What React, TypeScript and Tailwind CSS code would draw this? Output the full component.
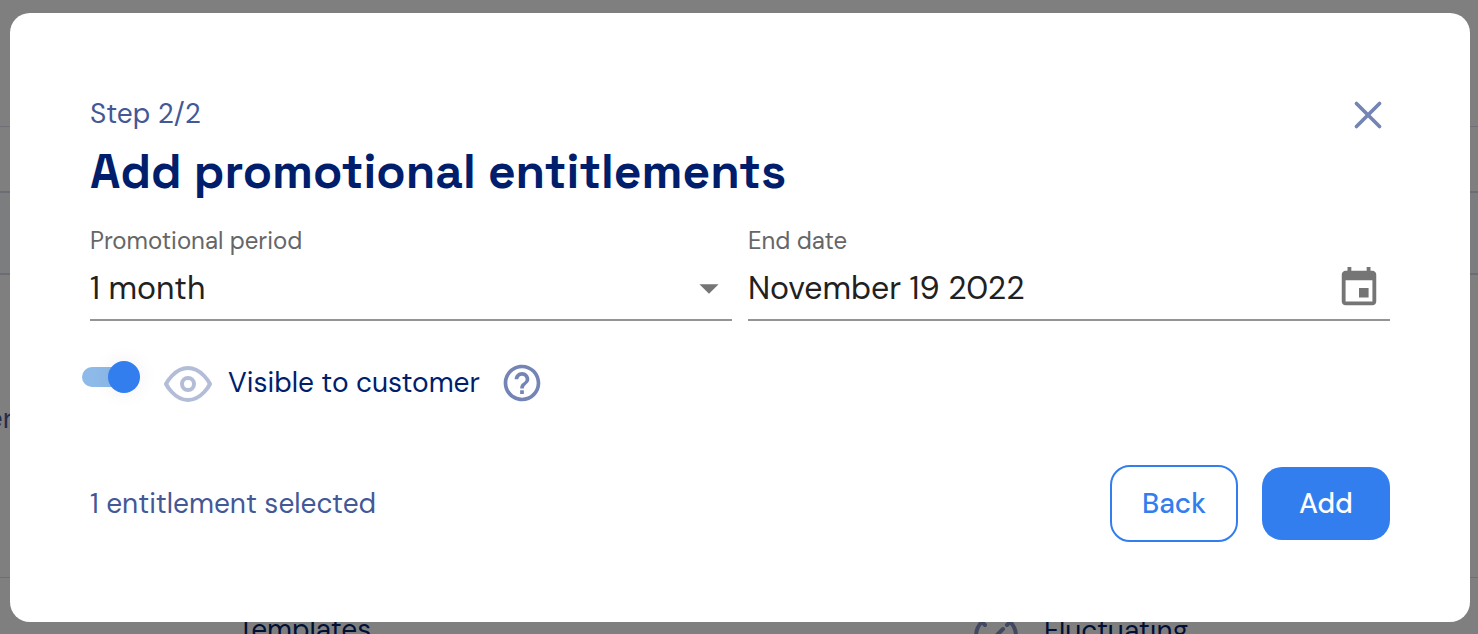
import { useState } from "react";

function Backdrop() {
  return (
    <div aria-hidden="true" className="absolute inset-0 overflow-hidden bg-white text-[28px] leading-[42px] text-[#001e6c]">
      <div className="h-[127px] border-b border-[#dfe0ee]" />
      <div className="h-[66px] border-b-2 border-[#d8dae8]" />
      <div className="h-[82px] border-b-2 border-[#d8dae8] bg-[#f6faff]" />
      <div className="flex h-[303px] items-center border-b border-[#dfdfe2] pb-[14px] text-[#4a5c9c]">
        <span className="flex w-[13px] justify-end">er</span>
      </div>
      <div className="grid grid-cols-[238px_736px_1fr] pt-[31px]">
        <span />
        <span>Templates</span>
        <span className="flex items-center gap-[26px]">
          <svg viewBox="0 -5 44 44" className="size-11 overflow-visible" fill="none" stroke="#8591be" strokeWidth="4" strokeLinecap="round">
            <circle cx="22" cy="22" r="20" />
            <path d="M8 8l3 3M36 8l-3 3M20 24l9-9" />
          </svg>
          Fluctuating
        </span>
      </div>
    </div>
  );
}

export default function App() {
  const [visible, setVisible] = useState(true);
  const [period, setPeriod] = useState("1 month");
  const [date, setDate] = useState("November 19 2022");

  return (
    <div className="relative min-h-screen overflow-hidden font-['DM_Sans',Inter,sans-serif]">
      <Backdrop />
      <div className="relative min-h-screen bg-black/50 pt-[13px] pr-2 pb-3 pl-[10px]">
        <section role="dialog" aria-modal="true" aria-labelledby="dialog-title" className="rounded-[20px] bg-white p-20">
          <header className="flex items-start justify-between">
            <div>
              <p className="text-[28px] leading-[42px] text-[#435896]">Step 2/2</p>
              <h1 id="dialog-title" className="font-['Space_Grotesk','DM_Sans',Inter,sans-serif] text-[48px] leading-[74px] font-bold text-[#001e6c]">
                Add promotional entitlements
              </h1>
            </div>
            <button type="button" aria-label="Close" className="text-[#7485b5]">
              <svg viewBox="0 0 24 24" className="size-11" fill="none" stroke="currentColor" strokeWidth="2" strokeLinecap="round">
                <path d="M5.7 5.7l12.6 12.6M18.3 5.7l-12.6 12.6" />
              </svg>
            </button>
          </header>

          <div className="mt-[18px] grid grid-cols-2 gap-4">
            <div>
              <label htmlFor="period" className="block h-[30px] text-[24px] leading-[28px] text-[#666666]">
                Promotional period
              </label>
              <div className="relative">
                <select
                  id="period"
                  value={period}
                  onChange={(e) => setPeriod(e.target.value)}
                  className="block h-16 w-full appearance-none border-b-2 border-[#949494] bg-transparent text-[32px] text-[#212121] outline-none"
                >
                  <option>1 month</option>
                </select>
                <svg viewBox="0 0 24 24" className="pointer-events-none absolute top-2 right-0 size-[46px] fill-[#757575]">
                  <path d="M7 10l5 5 5-5z" />
                </svg>
              </div>
            </div>
            <div>
              <label htmlFor="end-date" className="block h-[30px] text-[24px] leading-[28px] text-[#666666]">
                End date
              </label>
              <div className="flex h-16 items-center border-b-2 border-[#949494] pr-2">
                <input
                  id="end-date"
                  value={date}
                  onChange={(e) => setDate(e.target.value)}
                  className="min-w-0 flex-1 bg-transparent text-[32px] text-[#212121] outline-none"
                />
                <button type="button" aria-label="Choose date">
                  <svg viewBox="0 0 24 24" className="size-[46px] fill-[#757575]">
                    <path d="M17 12h-5v5h5v-5zM16 1v2H8V1H6v2H5c-1.11 0-1.99.9-1.99 2L3 19c0 1.1.89 2 2 2h14c1.1 0 2-.9 2-2V5c0-1.1-.9-2-2-2h-1V1h-2zm3 18H5V8h14v11z" />
                  </svg>
                </button>
              </div>
            </div>
          </div>

          <div className="mt-8 -ml-2 flex items-start gap-6">
            <span className="relative flex h-12 w-[58px] items-center">
              <input
                id="visible"
                type="checkbox"
                role="switch"
                checked={visible}
                onChange={(e) => setVisible(e.target.checked)}
                className="peer h-5 w-[52px] appearance-none rounded-full bg-gray-300 outline-none checked:bg-[#8dbae8]"
              />
              <span className="pointer-events-none absolute left-0 size-8 rounded-full bg-gray-50 shadow-[0_0_20px_rgba(0,30,108,0.07)] peer-checked:left-auto peer-checked:right-0 peer-checked:bg-[#327eef]" />
            </span>
            <div className="flex h-[60px] items-center gap-5">
              <div className="flex items-center gap-4">
                <svg viewBox="0 0 24 24" className="size-12" fill="none" stroke="#b3bdd8" strokeWidth="2" strokeLinecap="round" strokeLinejoin="round">
                  <path d="M1 12.5s4-8 11-8 11 8 11 8-4 8-11 8-11-8-11-8z" />
                  <circle cx="12" cy="12.5" r="3" />
                </svg>
                <label htmlFor="visible" className="text-[28px] leading-[42px] text-[#001e6c]">
                  Visible to customer
                </label>
              </div>
              <button type="button" aria-label="Help">
                <svg viewBox="0 0 24 24" className="size-11 fill-[#7485b5]">
                  <path d="M11 18h2v-2h-2v2zm1-16C6.48 2 2 6.48 2 12s4.48 10 10 10 10-4.48 10-10S17.52 2 12 2zm0 18c-4.41 0-8-3.59-8-8s3.59-8 8-8 8 3.59 8 8-3.59 8-8 8zm0-14c-2.21 0-4 1.79-4 4h2c0-1.1.9-2 2-2s2 .9 2 2c0 2-3 1.75-3 5h2c0-2.25 3-2.5 3-5 0-2.21-1.79-4-4-4z" />
                </svg>
              </button>
            </div>
          </div>

          <footer className="mt-[52px] flex items-center justify-between">
            <p className="text-[28px] leading-[42px] text-[#435896]">1 entitlement selected</p>
            <div className="flex items-center gap-6">
              <button type="button" className="h-[77px] w-32 rounded-[20px] border-2 border-[#327eef] text-[28px] font-medium text-[#327eef]">
                Back
              </button>
              <button type="button" className="h-[73px] w-32 rounded-[20px] bg-[#327eef] text-[28px] font-medium text-white">
                Add
              </button>
            </div>
          </footer>
        </section>
      </div>
    </div>
  );
}
